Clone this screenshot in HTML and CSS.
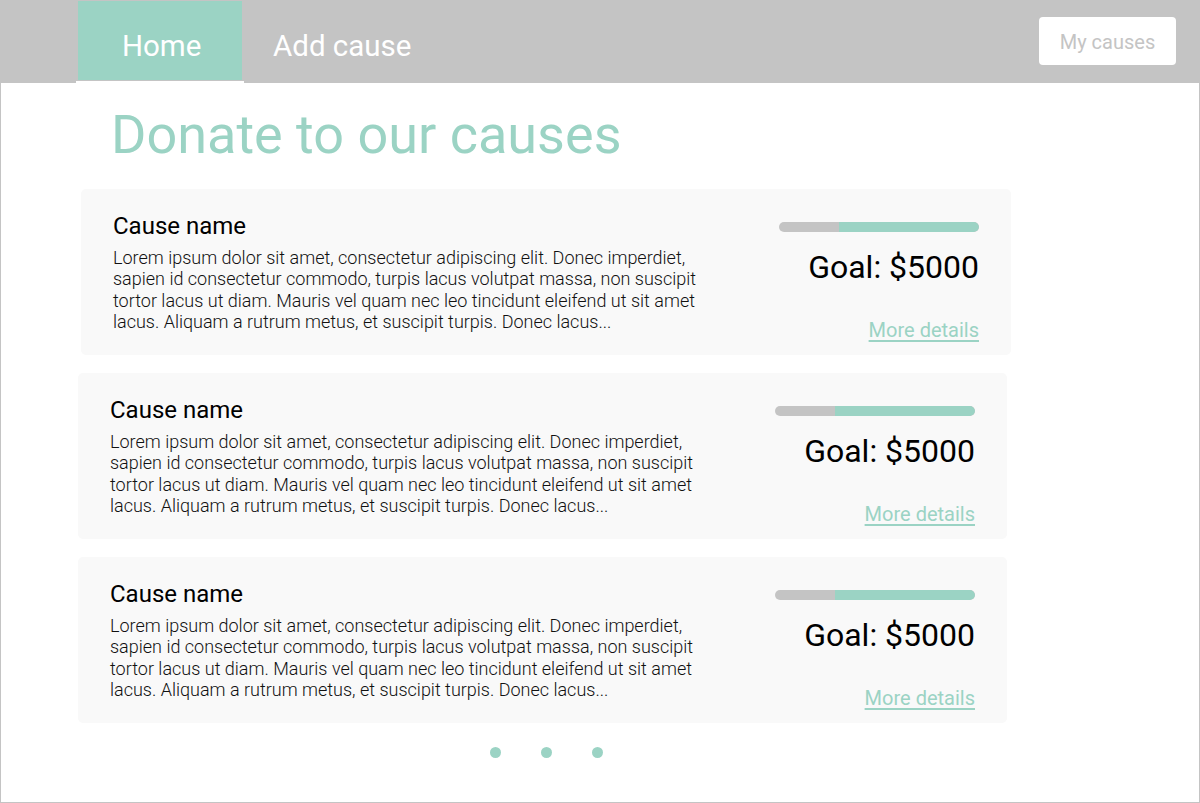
FILE: index.html
```html
<!DOCTYPE html>
<html lang="en">
<head>
<meta charset="utf-8">
<title>Donate to our causes</title>
<link rel="stylesheet" href="styles.css">
</head>
<body>
<div class="page">
  <header class="nav">
    <a class="tab tab--active" href="#">Home</a>
    <a class="tab tab--plain" href="#">Add cause</a>
    <a class="my-causes" href="#">My causes</a>
  </header>
  <main class="content">
    <h1 class="title">Donate to our causes</h1>
    <div class="cards">
      <article class="card card--first">
        <div class="info">
          <h2 class="cause-name">Cause name</h2>
          <p class="desc">Lorem ipsum dolor sit amet, consectetur adipiscing elit. Donec imperdiet, sapien id consectetur commodo, turpis lacus volutpat massa, non suscipit tortor lacus ut diam. Mauris vel quam nec leo tincidunt eleifend ut sit amet lacus. Aliquam a rutrum metus, et suscipit turpis. Donec lacus...</p>
        </div>
        <div class="meta">
          <div class="bar"><div class="bar-fill" style="width:70%"></div></div>
          <div class="goal">Goal: $5000</div>
          <a class="more" href="#">More details</a>
        </div>
      </article>
      <article class="card">
        <div class="info">
          <h2 class="cause-name">Cause name</h2>
          <p class="desc">Lorem ipsum dolor sit amet, consectetur adipiscing elit. Donec imperdiet, sapien id consectetur commodo, turpis lacus volutpat massa, non suscipit tortor lacus ut diam. Mauris vel quam nec leo tincidunt eleifend ut sit amet lacus. Aliquam a rutrum metus, et suscipit turpis. Donec lacus...</p>
        </div>
        <div class="meta">
          <div class="bar"><div class="bar-fill" style="width:70%"></div></div>
          <div class="goal">Goal: $5000</div>
          <a class="more" href="#">More details</a>
        </div>
      </article>
      <article class="card">
        <div class="info">
          <h2 class="cause-name">Cause name</h2>
          <p class="desc">Lorem ipsum dolor sit amet, consectetur adipiscing elit. Donec imperdiet, sapien id consectetur commodo, turpis lacus volutpat massa, non suscipit tortor lacus ut diam. Mauris vel quam nec leo tincidunt eleifend ut sit amet lacus. Aliquam a rutrum metus, et suscipit turpis. Donec lacus...</p>
        </div>
        <div class="meta">
          <div class="bar"><div class="bar-fill" style="width:70%"></div></div>
          <div class="goal">Goal: $5000</div>
          <a class="more" href="#">More details</a>
        </div>
      </article>
    </div>
    <div class="dots">
      <span class="dot"></span>
      <span class="dot"></span>
      <span class="dot"></span>
    </div>
  </main>
</div>
</body>
</html>
```

FILE: styles.css
```css
* {
  box-sizing: border-box;
}

html, body {
  margin: 0;
  padding: 0;
  background: #ffffff;
}

body {
  font-family: Roboto, "Liberation Sans", sans-serif;
  color: #000000;
}

.page {
  width: 1200px;
  height: 803px;
  border: 1px solid #c4c4c4;
  overflow: hidden;
  display: flex;
  flex-direction: column;
}

/* ---------- Navigation ---------- */
.nav {
  display: flex;
  align-items: flex-start;
  height: 82px;
  padding-left: 77px;
  background: #c4c4c4;
}

.tab {
  position: relative;
  display: block;
  height: 79px;
  padding-top: 30px;
  font-size: 29.5px;
  line-height: 30px;
  font-weight: 400;
  color: #ffffff;
  text-decoration: none;
}

.tab--active {
  width: 164px;
  padding-left: 44px;
  background: #9bd3c4;
}

.tab--active::after {
  content: "";
  position: absolute;
  left: -2px;
  right: -2px;
  top: 80px;
  height: 2px;
  background: #ffffff;
}

.tab--plain {
  padding-left: 31px;
}

.my-causes {
  margin-left: auto;
  margin-top: 16px;
  margin-right: 23px;
  width: 137px;
  height: 48px;
  border-radius: 4px;
  background: #ffffff;
  color: #c4c4c4;
  font-size: 20px;
  line-height: 50px;
  text-align: center;
  text-decoration: none;
}

/* ---------- Content ---------- */
.content {
  flex: 1;
}

.title {
  margin: 21px 0 0 110px;
  font-size: 54px;
  line-height: 62px;
  font-weight: 400;
  color: #9bd3c4;
}

.cards {
  display: flex;
  flex-direction: column;
  gap: 18px;
  margin: 23px 0 0 77px;
  width: 929px;
}

.card {
  display: flex;
  align-items: flex-start;
  height: 166px;
  padding: 23px 32px 0 32px;
  background: #f9f9f9;
  border-radius: 5px;
}

.card--first {
  margin-left: 3px;
  width: 930px;
}

.info {
  width: 600px;
}

.cause-name {
  margin: 0 0 6px 0;
  font-size: 24px;
  line-height: 29px;
  font-weight: 400;
  color: #000000;
}

.desc {
  margin: 0;
  font-size: 18px;
  line-height: 21.4px;
  font-weight: 300;
  color: #111111;
}

.meta {
  margin-left: auto;
  display: flex;
  flex-direction: column;
  align-items: flex-end;
  width: 200px;
}

.bar {
  position: relative;
  margin-top: 10px;
  width: 200px;
  height: 10px;
  border-radius: 5px;
  background: #c4c4c4;
  display: flex;
  justify-content: flex-end;
  overflow: hidden;
}

.bar-fill {
  height: 100%;
  background: #9bd3c4;
  border-radius: 0 5px 5px 0;
}

.goal {
  margin-top: 19px;
  font-size: 32px;
  line-height: 32px;
  font-weight: 400;
  white-space: nowrap;
}

.more {
  margin-top: 37px;
  font-size: 20px;
  line-height: 20px;
  color: #9bd3c4;
  text-decoration: underline;
  text-underline-offset: 3px;
  white-space: nowrap;
}

/* ---------- Pager dots ---------- */
.dots {
  display: flex;
  gap: 40px;
  margin: 24px 0 0 489px;
}

.dot {
  width: 11px;
  height: 11px;
  border-radius: 50%;
  background: #9bd3c4;
}
```
